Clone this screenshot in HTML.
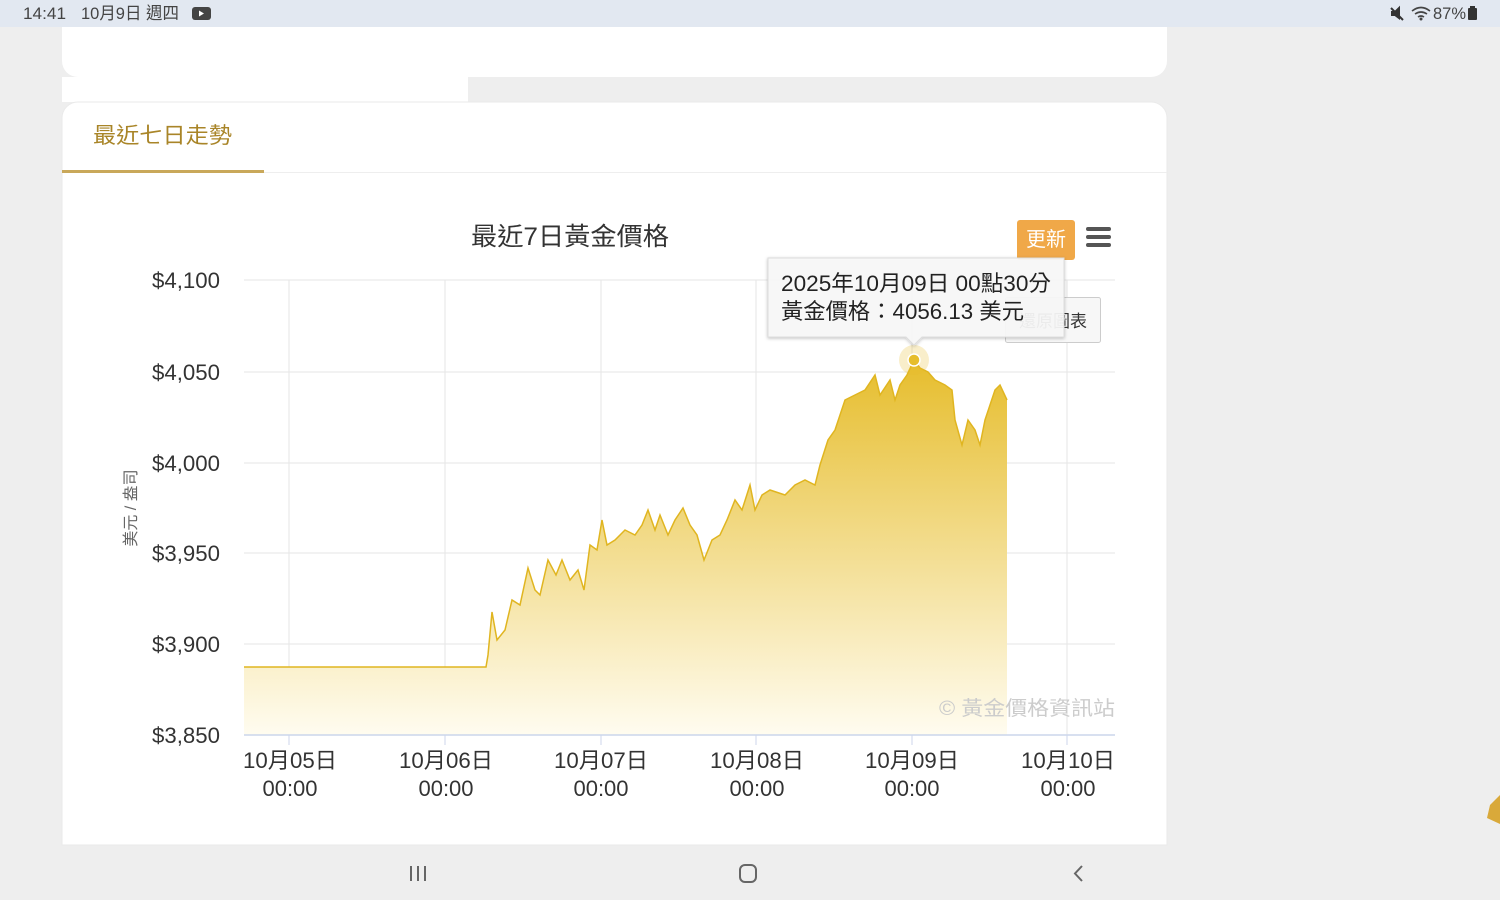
<!DOCTYPE html>
<html><head><meta charset="utf-8"><style>
html,body{margin:0;padding:0;width:1500px;height:900px;overflow:hidden;background:#eeeeee}
svg{display:block}
text{font-family:"Liberation Sans","Noto Sans CJK TC",sans-serif}
</style></head><body>
<svg width="1500" height="900" viewBox="0 0 1500 900" xmlns="http://www.w3.org/2000/svg">
<defs>
<linearGradient id="g" x1="0" y1="360" x2="0" y2="735" gradientUnits="userSpaceOnUse">
<stop offset="0" stop-color="#e6bd2c"/>
<stop offset="1" stop-color="#fffcf0"/>
</linearGradient>
<filter id="sh" x="-10%" y="-10%" width="120%" height="130%"><feDropShadow dx="0" dy="1" stdDeviation="1.5" flood-opacity="0.25"/></filter>
</defs>
<rect width="1500" height="900" fill="#eeeeee"/>
<rect width="1500" height="27" fill="#e2e8f1"/>
<text x="23" y="19" font-size="17" fill="#444" textLength="43" lengthAdjust="spacingAndGlyphs">14:41</text>
<text x="81" y="19" font-size="17" fill="#444" textLength="98" lengthAdjust="spacingAndGlyphs">10月9日 週四</text>
<rect x="192" y="7" width="19" height="13" rx="3" fill="#444"/>
<path d="M199 10.5 L204 13.5 L199 16.5Z" fill="#fff"/>
<path d="M1391 8 L1403 20 M1392 12 h3 l4 -4 v10 l-4 -3 h-3z" stroke="#333" stroke-width="2" fill="#333"/>
<path d="M1412 11 q9 -7 18 0 M1415 14 q6 -4 12 0 M1418 17 q3 -2 6 0" stroke="#444" stroke-width="1.6" fill="none"/>
<circle cx="1421" cy="19" r="1.5" fill="#444"/>
<text x="1433" y="19" font-size="17" fill="#444" textLength="33" lengthAdjust="spacingAndGlyphs">87%</text>
<rect x="1468" y="8" width="9" height="12" rx="1" fill="#333"/><rect x="1470" y="6" width="5" height="2" fill="#333"/>
<path d="M62 27 H1167 V61 a16 16 0 0 1 -16 16 H78 a16 16 0 0 1 -16 -16Z" fill="#fff"/>
<rect x="62" y="77" width="406" height="25" fill="#fff"/>
<path d="M78 102 H1151 a16 16 0 0 1 16 16 V845 H62 V118 a16 16 0 0 1 16 -16Z" fill="#fff" stroke="#eaeaea"/>
<text x="93" y="143" font-size="22" fill="#a98528" textLength="139" lengthAdjust="spacingAndGlyphs">最近七日走勢</text>
<rect x="62" y="172" width="1105" height="1" fill="#eeeeee"/>
<rect x="62" y="170" width="202" height="3" fill="#c9a85a"/>
<text x="471" y="245" font-size="25" fill="#333" textLength="198" lengthAdjust="spacingAndGlyphs">最近7日黃金價格</text>
<g stroke="#e6e6e6" stroke-width="1">
<line x1="244" y1="280" x2="1115" y2="280"/><line x1="244" y1="372" x2="1115" y2="372"/>
<line x1="244" y1="463" x2="1115" y2="463"/><line x1="244" y1="553" x2="1115" y2="553"/>
<line x1="244" y1="644" x2="1115" y2="644"/>
<line x1="289" y1="280" x2="289" y2="735"/><line x1="445" y1="280" x2="445" y2="735"/>
<line x1="601" y1="280" x2="601" y2="735"/><line x1="756" y1="280" x2="756" y2="735"/>
<line x1="912" y1="280" x2="912" y2="735"/><line x1="1067" y1="280" x2="1067" y2="735"/>
</g>
<path d="M244 667 L486 667 L488 655 L492 612 L497 640 L505 630 L512 600 L520 605 L528 568 L535 590 L540 595 L548 560 L556 575 L562 560 L570 580 L578 570 L584 590 L590 545 L597 550 L602 520 L607 545 L615 540 L625 530 L635 535 L642 525 L648 510 L655 530 L660 515 L668 535 L675 520 L683 508 L690 525 L697 535 L704 560 L712 540 L720 535 L727 520 L735 500 L742 510 L750 485 L755 510 L762 495 L770 490 L785 495 L795 485 L805 480 L815 485 L820 465 L828 440 L835 430 L845 400 L855 395 L865 390 L875 375 L880 395 L890 380 L895 400 L900 385 L907 375 L914 360 L920 368 L928 372 L935 380 L945 385 L952 390 L955 420 L962 445 L968 420 L975 430 L980 445 L985 420 L990 405 L995 390 L1000 385 L1007 400 L1007 735 L244 735Z" fill="url(#g)"/>
<path d="M244 667 L486 667 L488 655 L492 612 L497 640 L505 630 L512 600 L520 605 L528 568 L535 590 L540 595 L548 560 L556 575 L562 560 L570 580 L578 570 L584 590 L590 545 L597 550 L602 520 L607 545 L615 540 L625 530 L635 535 L642 525 L648 510 L655 530 L660 515 L668 535 L675 520 L683 508 L690 525 L697 535 L704 560 L712 540 L720 535 L727 520 L735 500 L742 510 L750 485 L755 510 L762 495 L770 490 L785 495 L795 485 L805 480 L815 485 L820 465 L828 440 L835 430 L845 400 L855 395 L865 390 L875 375 L880 395 L890 380 L895 400 L900 385 L907 375 L914 360 L920 368 L928 372 L935 380 L945 385 L952 390 L955 420 L962 445 L968 420 L975 430 L980 445 L985 420 L990 405 L995 390 L1000 385 L1007 400" fill="none" stroke="#e0b520" stroke-width="1.5"/>
<line x1="244" y1="735" x2="1115" y2="735" stroke="#ccd6eb" stroke-width="1.5"/>
<g stroke="#ccd6eb"><line x1="289" y1="735" x2="289" y2="745"/><line x1="445" y1="735" x2="445" y2="745"/><line x1="601" y1="735" x2="601" y2="745"/><line x1="756" y1="735" x2="756" y2="745"/><line x1="912" y1="735" x2="912" y2="745"/><line x1="1067" y1="735" x2="1067" y2="745"/></g>
<g font-size="22" fill="#333">
<text x="152" y="288" textLength="68" lengthAdjust="spacingAndGlyphs">$4,100</text>
<text x="152" y="380" textLength="68" lengthAdjust="spacingAndGlyphs">$4,050</text>
<text x="152" y="471" textLength="68" lengthAdjust="spacingAndGlyphs">$4,000</text>
<text x="152" y="561" textLength="68" lengthAdjust="spacingAndGlyphs">$3,950</text>
<text x="152" y="652" textLength="68" lengthAdjust="spacingAndGlyphs">$3,900</text>
<text x="152" y="743" textLength="68" lengthAdjust="spacingAndGlyphs">$3,850</text>
</g>
<text transform="translate(136 508) rotate(-90)" font-size="16" fill="#666" text-anchor="middle">美元 / 盎司</text>
<g font-size="22" fill="#333" text-anchor="middle">
<text x="290" y="768" textLength="94" lengthAdjust="spacingAndGlyphs">10月05日</text><text x="290" y="796">00:00</text>
<text x="446" y="768" textLength="94" lengthAdjust="spacingAndGlyphs">10月06日</text><text x="446" y="796">00:00</text>
<text x="601" y="768" textLength="94" lengthAdjust="spacingAndGlyphs">10月07日</text><text x="601" y="796">00:00</text>
<text x="757" y="768" textLength="94" lengthAdjust="spacingAndGlyphs">10月08日</text><text x="757" y="796">00:00</text>
<text x="912" y="768" textLength="94" lengthAdjust="spacingAndGlyphs">10月09日</text><text x="912" y="796">00:00</text>
<text x="1068" y="768" textLength="94" lengthAdjust="spacingAndGlyphs">10月10日</text><text x="1068" y="796">00:00</text>
</g>
<text x="939" y="715" font-size="20" fill="#ccc" textLength="176" lengthAdjust="spacingAndGlyphs">© 黃金價格資訊站</text>
<rect x="1017" y="220" width="58" height="40" rx="3" fill="#f0a848"/>
<text x="1046" y="246" font-size="20" fill="#fff" text-anchor="middle">更新</text>
<g stroke="#555" stroke-width="4" stroke-linecap="round"><line x1="1088" y1="229" x2="1109" y2="229"/><line x1="1088" y1="237" x2="1109" y2="237"/><line x1="1088" y1="245" x2="1109" y2="245"/></g>
<rect x="1005.5" y="297.5" width="95" height="45" rx="2" fill="#f7f7f7" stroke="#ccc"/>
<text x="1053" y="327" font-size="17" fill="#333" text-anchor="middle">還原圖表</text>
<circle cx="914" cy="360" r="15" fill="#e6bd2c" opacity="0.25"/>
<circle cx="914" cy="360" r="6" fill="#e6bd2c" stroke="#fff" stroke-width="1.5"/>
<g filter="url(#sh)">
<path d="M768 258 H1064 V337 H922 L914 345 L906 337 H768Z" fill="#f8f8f8" fill-opacity="0.92" stroke="#ddd"/>
</g>
<text x="781" y="291" font-size="22" fill="#222" textLength="270" lengthAdjust="spacingAndGlyphs">2025年10月09日 00點30分</text>
<text x="781" y="319" font-size="22" fill="#222" textLength="243" lengthAdjust="spacingAndGlyphs">黃金價格：4056.13 美元</text>
<path d="M1500 795 L1490 805 L1487 818 L1500 824Z" fill="#d9a93a"/>
<g stroke="#666" stroke-width="2" fill="none">
<line x1="411" y1="866" x2="411" y2="881"/><line x1="418" y1="866" x2="418" y2="881"/><line x1="425" y1="866" x2="425" y2="881"/>
<rect x="740" y="865" width="16" height="17" rx="5"/>
<path d="M1082 866 L1075 873.5 L1082 881"/>
</g>
</svg>
</body></html>
